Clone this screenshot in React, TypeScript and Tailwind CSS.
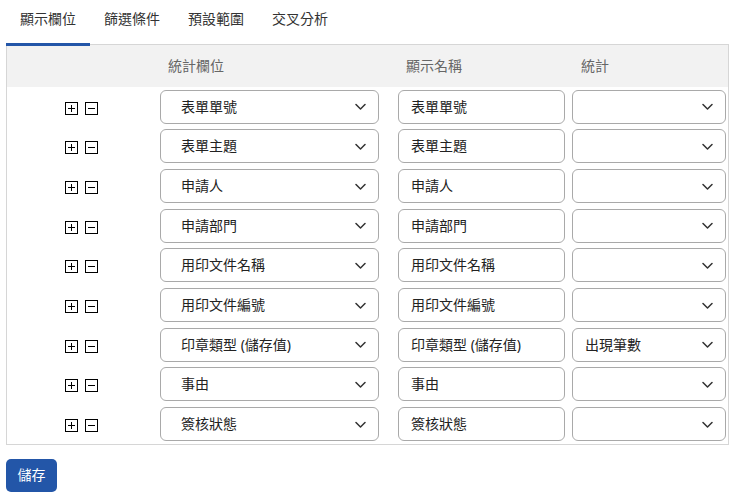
import React from "react";

const tabs = ["顯示欄位", "篩選條件", "預設範圍", "交叉分析"];

const rows = [
  { field: "表單單號", name: "表單單號", stat: "" },
  { field: "表單主題", name: "表單主題", stat: "" },
  { field: "申請人", name: "申請人", stat: "" },
  { field: "申請部門", name: "申請部門", stat: "" },
  { field: "用印文件名稱", name: "用印文件名稱", stat: "" },
  { field: "用印文件編號", name: "用印文件編號", stat: "" },
  { field: "印章類型 (儲存值)", name: "印章類型 (儲存值)", stat: "出現筆數" },
  { field: "事由", name: "事由", stat: "" },
  { field: "簽核狀態", name: "簽核狀態", stat: "" },
];

function Chevron() {
  return (
    <svg width="11" height="11" viewBox="0 0 11 11" fill="none" className="shrink-0">
      <path d="M1 3.5 L5.5 8 L10 3.5" stroke="#333" strokeWidth="1.5" strokeLinecap="round" strokeLinejoin="round" />
    </svg>
  );
}

function BoxIcon({ plus }: { plus?: boolean }) {
  return (
    <svg width="13" height="13" viewBox="0 0 13 13" fill="none">
      <rect x="0.5" y="0.5" width="12" height="12" fill="white" stroke="#000" />
      <path d="M3 6.5 H10" stroke="#000" />
      {plus && <path d="M6.5 3 V10" stroke="#000" />}
    </svg>
  );
}

function FakeSelect({ value, className, pad }: { value: string; className: string; pad: string }) {
  return (
    <div
      className={`flex h-[34px] items-center justify-between rounded-[6px] border border-[#a9a9a9] bg-white pr-[12px] text-sm text-[#222] ${pad} ${className}`}
    >
      <span className="truncate">{value}</span>
      <Chevron />
    </div>
  );
}

export default function App() {
  return (
    <div
      className="min-h-[500px] bg-white px-[6px] text-sm text-[#333]"
      style={{ fontFamily: '"Noto Sans", "Noto Sans CJK TC", sans-serif' }}
    >
      {/* Tabs */}
      <div className="flex h-[45px] border-b border-[#d6d6d6]">
        {tabs.map((t, i) => (
          <div key={t} className="relative flex h-[44px] w-[84px] justify-center pt-[9px] leading-5 text-[#333]">
            {t}
            {i === 0 && <span className="absolute bottom-[-2px] left-0 right-0 h-[3px] bg-[#2356a8]" />}
          </div>
        ))}
      </div>

      {/* Table */}
      <div className="border-x border-b border-[#d6d6d6]">
        <div className="flex h-[42px] items-center bg-[#f2f2f2] text-[#666]">
          <div className="w-[153px]" />
          <div className="w-[238px] pl-[8px]">統計欄位</div>
          <div className="w-[174px] pl-[8px]">顯示名稱</div>
          <div className="pl-[9px]">統計</div>
        </div>
        {rows.map((r, i) => (
          <div key={i} className="flex h-[39.67px] items-center">
            <div className="flex w-[153px] justify-center gap-[7px] pr-[5px] pt-[3px]">
              <BoxIcon plus />
              <BoxIcon />
            </div>
            <FakeSelect value={r.field} className="w-[219px]" pad="pl-[20px]" />
            <div className="ml-[19px] flex h-[34px] w-[167px] items-center rounded-[6px] border border-[#a9a9a9] bg-white pl-[12px] text-[#222]">
              {r.name}
            </div>
            <FakeSelect value={r.stat} className="ml-[7px] w-[154px]" pad="pl-[12px]" />
          </div>
        ))}
      </div>

      {/* Save */}
      <button className="mt-[14px] flex h-[33px] w-[51px] items-center justify-center rounded-[5px] bg-[#2356a8] text-sm text-white">
        儲存
      </button>
    </div>
  );
}
